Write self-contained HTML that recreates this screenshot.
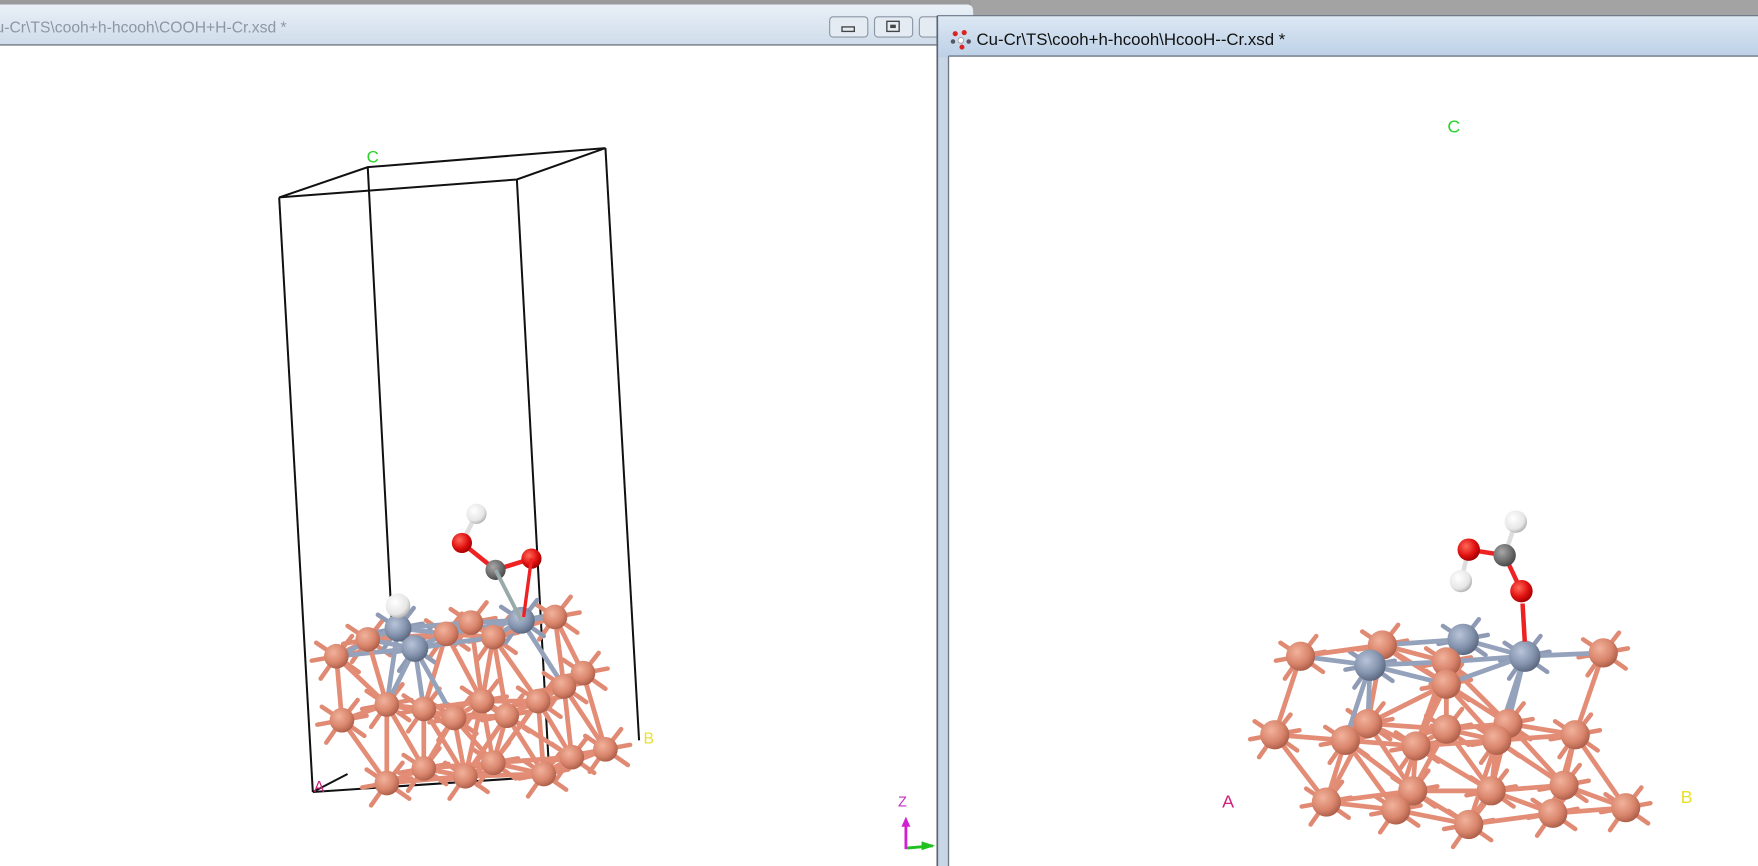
<!DOCTYPE html>
<html><head><meta charset="utf-8">
<style>
html,body{margin:0;padding:0;background:#fff;overflow:hidden}
svg{display:block}
text{font-family:"Liberation Sans",sans-serif}
</style></head>
<body>
<svg id="s" width="1758" height="866" viewBox="0 0 1568 772" preserveAspectRatio="none" xmlns="http://www.w3.org/2000/svg">
<defs>
<linearGradient id="tb" x1="0" y1="0" x2="0" y2="1"><stop offset="0" stop-color="#e9f0f7"/><stop offset="1" stop-color="#cfdcea"/></linearGradient>
<linearGradient id="tb2" x1="0" y1="0" x2="0" y2="1"><stop offset="0" stop-color="#dde8f4"/><stop offset="1" stop-color="#bcd0e6"/></linearGradient>
<radialGradient id="cu" cx="0.38" cy="0.35" r="0.7"><stop offset="0" stop-color="#f2b29c"/><stop offset="0.6" stop-color="#d9856c"/><stop offset="1" stop-color="#a85a45"/></radialGradient>
<radialGradient id="cr" cx="0.38" cy="0.35" r="0.7"><stop offset="0" stop-color="#b8c4d8"/><stop offset="0.6" stop-color="#8493ad"/><stop offset="1" stop-color="#56627a"/></radialGradient>
<radialGradient id="ox" cx="0.38" cy="0.35" r="0.7"><stop offset="0" stop-color="#ff6a5a"/><stop offset="0.6" stop-color="#e01010"/><stop offset="1" stop-color="#900"/></radialGradient>
<radialGradient id="hy" cx="0.38" cy="0.35" r="0.7"><stop offset="0" stop-color="#ffffff"/><stop offset="0.7" stop-color="#e6e6e6"/><stop offset="1" stop-color="#aaa"/></radialGradient>
<radialGradient id="ca" cx="0.38" cy="0.35" r="0.7"><stop offset="0" stop-color="#a8a8a8"/><stop offset="0.6" stop-color="#6e6e6e"/><stop offset="1" stop-color="#444"/></radialGradient>
</defs>
<rect width="1568" height="772" fill="#fff"/>
<!-- top gray desktop strip -->
<rect x="0" y="0" width="1568" height="6" fill="#9a9a9a"/>
<rect x="866" y="0" width="702" height="14" fill="#a3a3a3"/>
<!-- left window title -->
<path d="M0 4 H862 Q868 4 868 10 V40 H0 Z" fill="url(#tb)"/>
<line x1="0" y1="40" x2="868" y2="40" stroke="#8a9099" stroke-width="1.5"/>
<text x="-4" y="29" font-size="14" fill="#8d97a3">u-Cr\TS\cooh+h-hcooh\COOH+H-Cr.xsd *</text>
<rect x="740" y="15" width="34" height="18" rx="3" fill="#e4ebf3" stroke="#8c96a3"/>
<rect x="751" y="24" width="11" height="4" fill="none" stroke="#444" stroke-width="1.2"/>
<rect x="780" y="15" width="34" height="18" rx="3" fill="#e4ebf3" stroke="#8c96a3"/>
<rect x="791" y="19" width="11" height="9" fill="none" stroke="#444" stroke-width="1.2"/>
<rect x="794" y="22" width="5" height="3" fill="#444"/>
<rect x="820" y="15" width="24" height="18" rx="3" fill="#e4ebf3" stroke="#8c96a3"/>
<!-- right window -->
<path d="M836 20 Q836 14 842 14 H1568 V772 H836 Z" fill="#c8d6e6"/>
<rect x="836" y="14" width="732" height="37" fill="url(#tb2)"/>
<line x1="836" y1="14" x2="836" y2="772" stroke="#5a6676" stroke-width="1.5"/>
<line x1="836" y1="14" x2="1568" y2="14" stroke="#6a7686" stroke-width="1"/>
<rect x="846" y="50" width="722" height="722" fill="#fff"/>
<line x1="846" y1="50" x2="846" y2="772" stroke="#6d7786" stroke-width="1.2"/>
<line x1="846" y1="50" x2="1568" y2="50" stroke="#6d7786" stroke-width="1.2"/>
<circle cx="852" cy="30" r="2.3" fill="#d22"/><circle cx="860" cy="29" r="2.3" fill="#d22"/><circle cx="850" cy="37" r="2" fill="#556"/><circle cx="857" cy="36" r="2.5" fill="#fff" stroke="#888" stroke-width=".6"/><circle cx="864" cy="37" r="2" fill="#556"/><circle cx="858" cy="42" r="2.2" fill="#d22"/>
<text x="871" y="40" font-size="15" fill="#111">Cu-Cr\TS\cooh+h-hcooh\HcooH--Cr.xsd *</text>
<!-- left cell box -->
<g stroke="#111" stroke-width="1.8" fill="none">
<polygon points="249,176 328,149 540,132 461,160"/>
<line x1="249" y1="176" x2="279" y2="706"/>
<line x1="328" y1="149" x2="350" y2="565"/>
<line x1="461" y1="160" x2="490" y2="692"/>
<line x1="540" y1="132" x2="570" y2="660"/>
<polyline points="279,706 490,692"/>
<line x1="279" y1="706" x2="310" y2="690"/>
</g>
<text x="327" y="145" font-size="15" fill="#2ad42a">C</text>
<text x="280" y="706" font-size="14" fill="#d0207a">A</text>
<text x="574" y="663" font-size="14" fill="#e8e030">B</text>
<text x="1291" y="118" font-size="16" fill="#2ad42a">C</text>
<text x="1090" y="720" font-size="16" fill="#d0207a">A</text>
<text x="1499" y="716" font-size="16" fill="#e8e030">B</text>
<text x="801" y="719" font-size="13" fill="#c030c0">Z</text>
<line x1="808" y1="757" x2="808" y2="733" stroke="#d020d0" stroke-width="2.5"/>
<polygon points="804,737 808,728 812,737" fill="#d020d0"/>
<line x1="809" y1="756" x2="832" y2="754" stroke="#20c020" stroke-width="2.5"/>
<polygon points="822,750 834,754 822,758" fill="#20c020"/>
<g id="g1"></g>
<line x1="1280" y1="570" x2="1280" y2="736" stroke="#fff" stroke-width="2"/>
<g id="g2"></g>
</svg>
<script>
var NS="http://www.w3.org/2000/svg";
function el(p,n,a){var e=document.createElementNS(NS,n);for(var k in a)e.setAttribute(k,a[k]);p.appendChild(e);return e;}
function slab(g,atoms,mol,molBonds,dmin,dmax,r){
 var stub=[[-22,4],[22,-4],[-14,20],[14,-18],[20,14],[-18,-12]];
 atoms.forEach(function(a){stub.forEach(function(s){el(g,'line',{x1:a[0],y1:a[1],x2:a[0]+s[0],y2:a[1]+s[1],stroke:a[2]?'#8f9bb5':'#e08a74','stroke-width':4,'stroke-linecap':'round'});});});
 for(var i=0;i<atoms.length;i++)for(var j=i+1;j<atoms.length;j++){var a=atoms[i],b=atoms[j],d=Math.hypot(a[0]-b[0],a[1]-b[1]);if(d>dmin&&d<dmax){el(g,'line',{x1:a[0],y1:a[1],x2:b[0],y2:b[1],stroke:(a[2]||b[2])?'#95a2bb':'#e38d77','stroke-width':4.2});}}
 var s=atoms.slice().sort(function(a,b){return a[1]-b[1];});
 s.forEach(function(a){el(g,'circle',{cx:a[0],cy:a[1],r:a[2]?r+1:r,fill:a[2]?'url(#cr)':'url(#cu)'});});
 molBonds.forEach(function(b){var p=mol[b[0]],q=mol[b[1]];el(g,'line',{x1:p[0],y1:p[1],x2:q[0],y2:q[1],stroke:b[2],'stroke-width':4});});
 mol.forEach(function(m){el(g,'circle',{cx:m[0],cy:m[1],r:m[3],fill:'url(#'+m[2]+')'});});
}
var L=[[300,585],[328,570],[398,565],[420,555],[440,568],[495,550],[370,578,1],[355,560,1],[465,553,1],
[305,642],[345,628],[378,632],[405,640],[430,625],[452,638],[480,625],[503,612],[520,600],
[345,698],[378,685],[415,692],[440,680],[485,690],[510,675],[540,668]];
var Lm=[[442,508,'ca',9],[412,484,'ox',9],[474,498,'ox',9],[425,458,'hy',9],[355,540,'hy',11]];
slab(document.getElementById('g1'),L,Lm,[[0,1,'#e22'],[0,2,'#e22'],[1,3,'#ddd'],[0,0,'#999']],20,72,11);
var g1=document.getElementById('g1');
el(g1,'line',{x1:442,y1:508,x2:465,y2:553,stroke:'#9aa','stroke-width':3.5});
el(g1,'line',{x1:474,y1:498,x2:467,y2:550,stroke:'#e22','stroke-width':3});
var R=[[1160,585],[1233,575],[1290,590],[1430,582],[1290,610],[1305,570,1],[1360,585,1],[1222,593,1],
[1137,655],[1200,660],[1220,645],[1263,665],[1290,650],[1335,660],[1345,645],[1405,655],
[1183,715],[1245,722],[1310,735],[1260,705],[1385,725],[1450,720],[1330,705],[1395,700]];
var Rm=[[1342,495,'ca',10],[1357,527,'ox',10],[1310,490,'ox',10],[1352,465,'hy',10],[1303,518,'hy',10]];
slab(document.getElementById('g2'),R,Rm,[[0,1,'#e22'],[0,2,'#e22'],[0,3,'#ddd'],[2,4,'#ddd']],25,80,13);
var g2=document.getElementById('g2');
el(g2,'line',{x1:1358,y1:538,x2:1360,y2:572,stroke:'#e22','stroke-width':4});
</script>
</body></html>
